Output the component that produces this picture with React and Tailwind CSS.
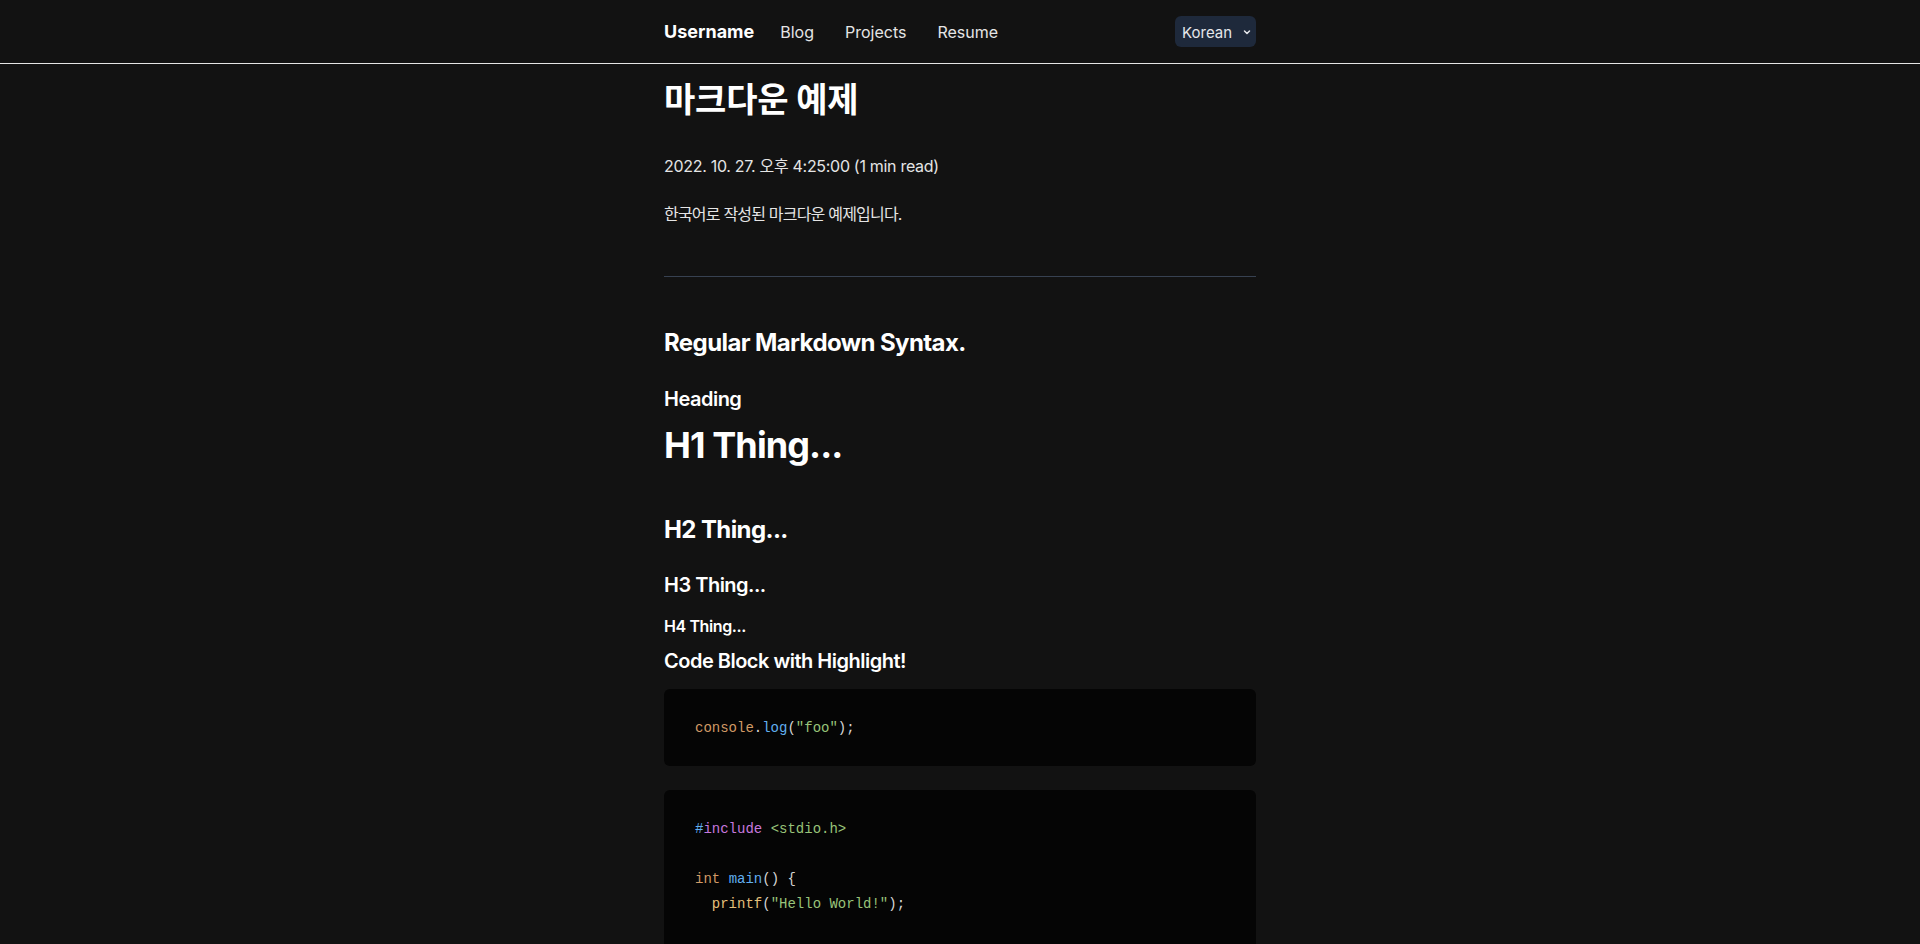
import React from 'react';

const P = ({ children }) => <span className="text-[#d4d4d4]">{children}</span>;

const Header = () => (
  <header className="h-16 border-b border-[#e5e5e5] bg-[#121212]">
    <div className="max-w-2xl mx-auto px-10 h-full flex items-center">
      <a className="text-lg font-bold text-white">Username</a>
      <nav className="flex items-center gap-[31px] ml-[26px] text-base text-[#e5e5e5]">
        <a>Blog</a>
        <a>Projects</a>
        <a>Resume</a>
      </nav>
      <div className="ml-auto relative">
        <select
          defaultValue="ko"
          className="appearance-none bg-[#1e293b] text-[#e5e7eb] text-[15px] h-[31px] w-[81px] pl-[7px] pr-4 pt-[3px] rounded-md outline-none"
        >
          <option value="ko">Korean</option>
          <option value="en">English</option>
        </select>
        <svg
          className="absolute right-[4px] top-1/2 -translate-y-1/2 w-[10px] h-[10px] pointer-events-none text-[#e5e7eb]"
          viewBox="0 0 20 20"
          fill="none"
          stroke="currentColor"
          strokeWidth="3"
        >
          <path strokeLinecap="round" strokeLinejoin="round" d="M5 8l5 5 5-5" />
        </svg>
      </div>
    </div>
  </header>
);

const CodeBlock = ({ children }) => (
  <pre className="bg-[#050505] rounded-md py-[26px] pl-[31px] pr-6 font-['DejaVu_Sans_Mono',monospace] text-[14px] leading-6 text-[#d4d4d4] overflow-x-auto">
    <code>{children}</code>
  </pre>
);

export default function App() {
  return (
    <div className="min-h-screen bg-[#121212] text-white font-['Inter','Noto_Sans_CJK_KR',sans-serif]">
      <Header />
      <main className="max-w-2xl mx-auto px-10 pt-[16px] pb-16">
        <h1 className="text-[34px] leading-10 font-bold tracking-[-0.2px]">마크다운 예제</h1>
        <p className="mt-[34px] text-base leading-6 text-[#e5e5e5] tracking-[-0.3px]">2022. 10. 27. 오후 4:25:00 (1 min read)</p>
        <p className="mt-6 text-base leading-6 text-[#e5e5e5] tracking-[-0.8px]">한국어로 작성된 마크다운 예제입니다.</p>
        <hr className="mt-[50px] border-0 border-t border-[#374151]" />

        <h2 className="mt-[50px] text-2xl leading-8 font-bold tracking-[-0.6px]">Regular Markdown Syntax.</h2>
        <h3 className="mt-[26px] text-xl leading-7 font-semibold tracking-tight">Heading</h3>
        <h1 className="mt-[12px] text-4xl leading-10 font-bold tracking-tight">H1 Thing...</h1>
        <h2 className="mt-[49px] text-2xl leading-8 font-bold tracking-tight">H2 Thing...</h2>
        <h3 className="mt-[25px] text-xl leading-7 font-semibold tracking-tight">H3 Thing...</h3>
        <h4 className="mt-[15px] text-base leading-6 font-semibold tracking-tight">H4 Thing...</h4>
        <h3 className="mt-[9px] text-xl leading-7 font-semibold tracking-tight">Code Block with Highlight!</h3>

        <div className="mt-[14px]">
          <CodeBlock>
            <span className="text-[#d19a66]">console</span>
            <P>.</P>
            <span className="text-[#61afef]">log</span>
            <P>(</P>
            <span className="text-[#98c379]">"foo"</span>
            <P>);</P>
          </CodeBlock>
        </div>

        <div className="mt-6">
          <CodeBlock>
            <span className="text-[#61afef]">#</span>
            <span className="text-[#c678dd]">include</span>{' '}
            <span className="text-[#98c379]">&lt;stdio.h&gt;</span>
            {'\n\n'}
            <span className="text-[#d19a66]">int</span>{' '}
            <span className="text-[#61afef]">main</span>
            <P>() {'{'}</P>
            {'\n  '}
            <span className="text-[#e5c07b]">printf</span>
            <P>(</P>
            <span className="text-[#98c379]">"Hello World!"</span>
            <P>);</P>
            {'\n\n  '}
            <span className="text-[#c678dd]">return</span>{' '}
            <span className="text-[#d19a66]">0</span>
            <P>;</P>
            {'\n'}
            <P>{'}'}</P>
          </CodeBlock>
        </div>
      </main>
    </div>
  );
}
